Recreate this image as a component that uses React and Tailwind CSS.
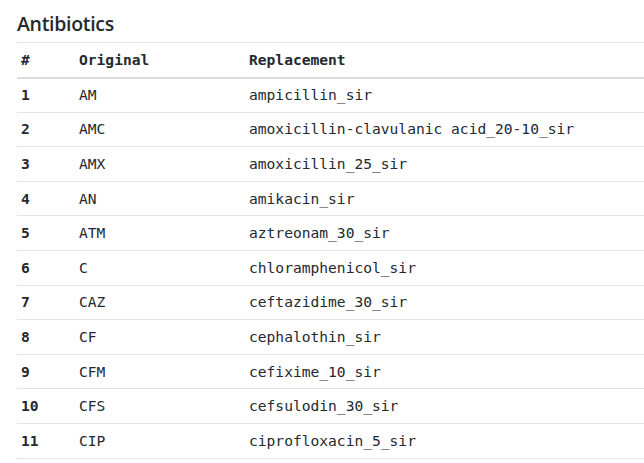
import React from 'react';

const rows = [
  ['1', 'AM', 'ampicillin_sir'],
  ['2', 'AMC', 'amoxicillin-clavulanic acid_20-10_sir'],
  ['3', 'AMX', 'amoxicillin_25_sir'],
  ['4', 'AN', 'amikacin_sir'],
  ['5', 'ATM', 'aztreonam_30_sir'],
  ['6', 'C', 'chloramphenicol_sir'],
  ['7', 'CAZ', 'ceftazidime_30_sir'],
  ['8', 'CF', 'cephalothin_sir'],
  ['9', 'CFM', 'cefixime_10_sir'],
  ['10', 'CFS', 'cefsulodin_30_sir'],
  ['11', 'CIP', 'ciprofloxacin_5_sir'],
];

const App = () => {
  return (
    <div className="w-[644px] h-[463px] overflow-hidden bg-white text-[#24292f]">
      <div className="pl-[17px] pt-[11px]">
        <h2 className="font-['Open_Sans',sans-serif] font-semibold text-[19.5px] leading-[25px] mb-[6px] tracking-[-0.3px]">
          Antibiotics
        </h2>
        <table className="w-[640px] border-collapse font-['DejaVu_Sans_Mono',monospace] text-[14.6px] border-t border-[#e1e4e8]">
          <thead>
            <tr className="border-b-2 border-[#d8dce1] h-[35px]">
              <th className="w-[58px] pl-[4px] text-left font-bold">#</th>
              <th className="w-[170px] pl-[4px] text-left font-bold">Original</th>
              <th className="pl-[4px] text-left font-bold">Replacement</th>
            </tr>
          </thead>
          <tbody>
            {rows.map(([n, orig, repl]) => (
              <tr key={n} className="border-b border-[#e1e4e8] h-[34.6px]">
                <td className="pl-[4px] font-bold">{n}</td>
                <td className="pl-[4px]">{orig}</td>
                <td className="pl-[4px]">{repl}</td>
              </tr>
            ))}
          </tbody>
        </table>
      </div>
    </div>
  );
};

export default App;
